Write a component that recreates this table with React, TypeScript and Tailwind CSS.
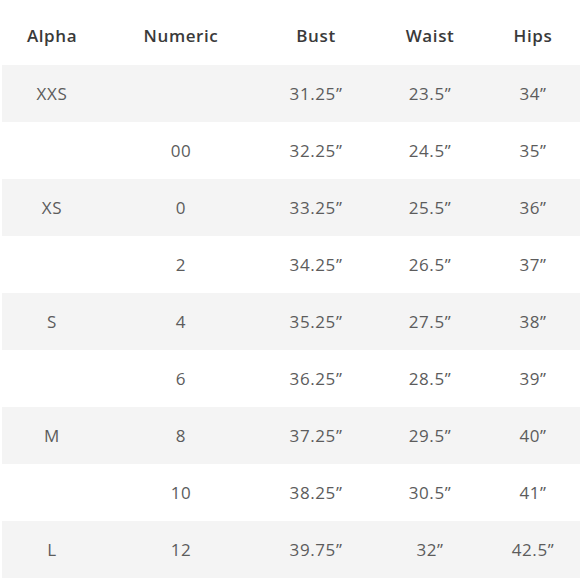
const headers = ["Alpha", "Numeric", "Bust", "Waist", "Hips"];

const rows = [
  ["XXS", "", "31.25\u201d", "23.5\u201d", "34\u201d"],
  ["", "00", "32.25\u201d", "24.5\u201d", "35\u201d"],
  ["XS", "0", "33.25\u201d", "25.5\u201d", "36\u201d"],
  ["", "2", "34.25\u201d", "26.5\u201d", "37\u201d"],
  ["S", "4", "35.25\u201d", "27.5\u201d", "38\u201d"],
  ["", "6", "36.25\u201d", "28.5\u201d", "39\u201d"],
  ["M", "8", "37.25\u201d", "29.5\u201d", "40\u201d"],
  ["", "10", "38.25\u201d", "30.5\u201d", "41\u201d"],
  ["L", "12", "39.75\u201d", "32\u201d", "42.5\u201d"],
];

const cols = "grid grid-cols-[100px_158px_112px_116px_90px]";

export default function App() {
  return (
    <div className="w-[580px] h-[580px] bg-white overflow-hidden pl-[2px] font-['Open_Sans','Lato',sans-serif] tracking-[0.6px]">
      <div className={`${cols} h-[65px] pt-[7px] items-center text-[17px] font-semibold text-[#3a3a3a]`}>
        {headers.map((h) => (
          <div key={h} className="text-center">
            {h}
          </div>
        ))}
      </div>
      {rows.map((r, i) => (
        <div
          key={i}
          className={`${cols} h-[57px] items-center text-[17px] text-[#5c5c5c] ${
            i % 2 === 0 ? "bg-[#f4f4f4]" : "bg-white"
          }`}
        >
          {r.map((c, j) => (
            <div key={j} className="text-center">
              {c}
            </div>
          ))}
        </div>
      ))}
    </div>
  );
}
